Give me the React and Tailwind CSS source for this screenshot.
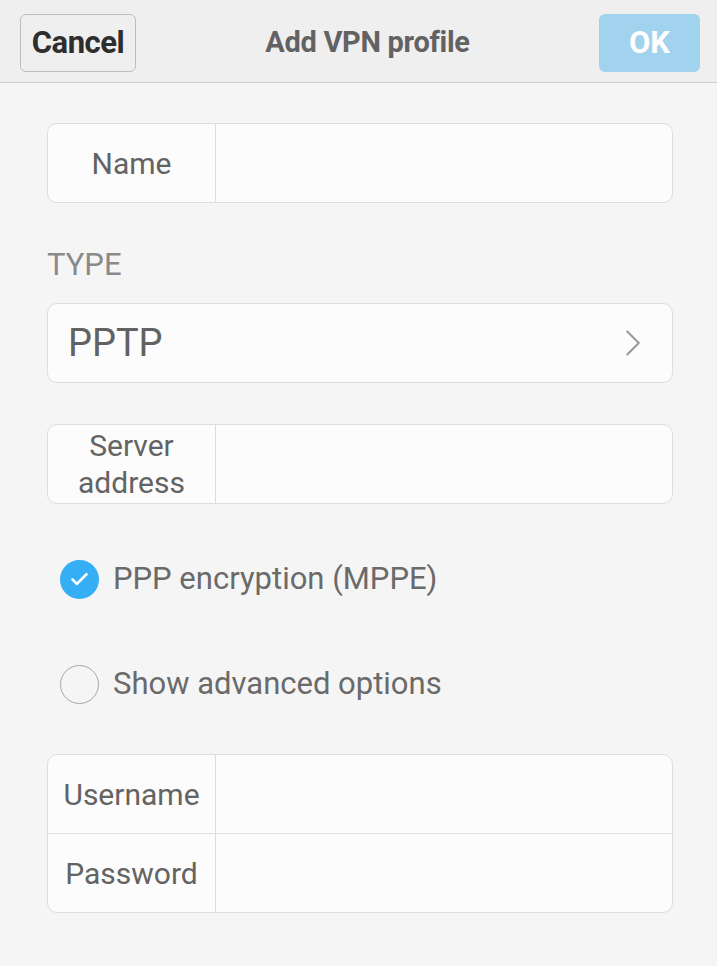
import { ChevronRight, Check } from "lucide-react";

function FieldRow({ label, last }) {
  return (
    <div className={"flex " + (last ? "h-[78px]" : "h-[79px] border-b border-[#e0e0e0]")}>
      <div className="flex w-[168px] shrink-0 items-center justify-center border-r border-[#dcdcdc] text-center text-[30px] leading-[37px] text-[#636363]">
        {label}
      </div>
      <div className="flex-1" />
    </div>
  );
}

function Card({ children }) {
  return (
    <div className="overflow-hidden rounded-[10px] border border-[#dedede] bg-[#fcfcfc]">
      {children}
    </div>
  );
}

function Option({ checked, label }) {
  return (
    <div className="flex h-[40px] items-center gap-[14px] pl-[13px]">
      {checked ? (
        <span className="flex h-[39px] w-[39px] items-center justify-center rounded-full bg-[#34aef5]">
          <Check size={21} strokeWidth={3} className="text-white" />
        </span>
      ) : (
        <span className="h-[39px] w-[39px] rounded-full border-[1.5px] border-[#a8a8a8]" />
      )}
      <span className="text-[31px] leading-[40px] text-[#6a6a6a]">{label}</span>
    </div>
  );
}

export default function App() {
  return (
    <div className="min-h-[966px] bg-[#f5f5f5]" style={{ fontFamily: "Roboto, 'Liberation Sans', sans-serif" }}>
      <header className="flex h-[83px] items-center justify-between border-b border-[#cfcfcf] bg-[#efefef] px-[20px] pr-[17px] pt-[4px]">
        <button className="h-[58px] w-[116px] rounded-md border border-[#bdbdbd] text-[31px] font-bold tracking-[-0.5px] text-[#2e2e2e]">
          Cancel
        </button>
        <h1 className="text-[29px] font-bold tracking-[-0.3px] text-[#626262]">Add VPN profile</h1>
        <button className="h-[58px] w-[101px] rounded-md bg-[#a1d2ee] text-[31px] font-bold text-white">
          OK
        </button>
      </header>

      <main className="flex flex-col pl-[47px] pr-[44px] pt-[40px]">
        <Card>
          <FieldRow label="Name" last />
        </Card>

        <div className="mt-[44px] text-[31px] leading-[36px] text-[#8a8a8a]">TYPE</div>

        <div className="mt-[20px] flex h-[80px] items-center justify-between rounded-[10px] border border-[#dedede] bg-[#fcfcfc] pl-[20px] pr-[16px]">
          <span className="text-[38px] text-[#626262]">PPTP</span>
          <ChevronRight size={46} strokeWidth={1.1} className="text-[#9a9a9a]" />
        </div>

        <div className="mt-[41px]">
          <Card>
            <FieldRow label={<>Server<br />address</>} last />
          </Card>
        </div>

        <div className="mt-[55px]">
          <Option checked label="PPP encryption (MPPE)" />
        </div>
        <div className="mt-[65px]">
          <Option label="Show advanced options" />
        </div>

        <div className="mt-[50px]">
          <Card>
            <FieldRow label="Username" />
            <FieldRow label="Password" last />
          </Card>
        </div>
      </main>
    </div>
  );
}
